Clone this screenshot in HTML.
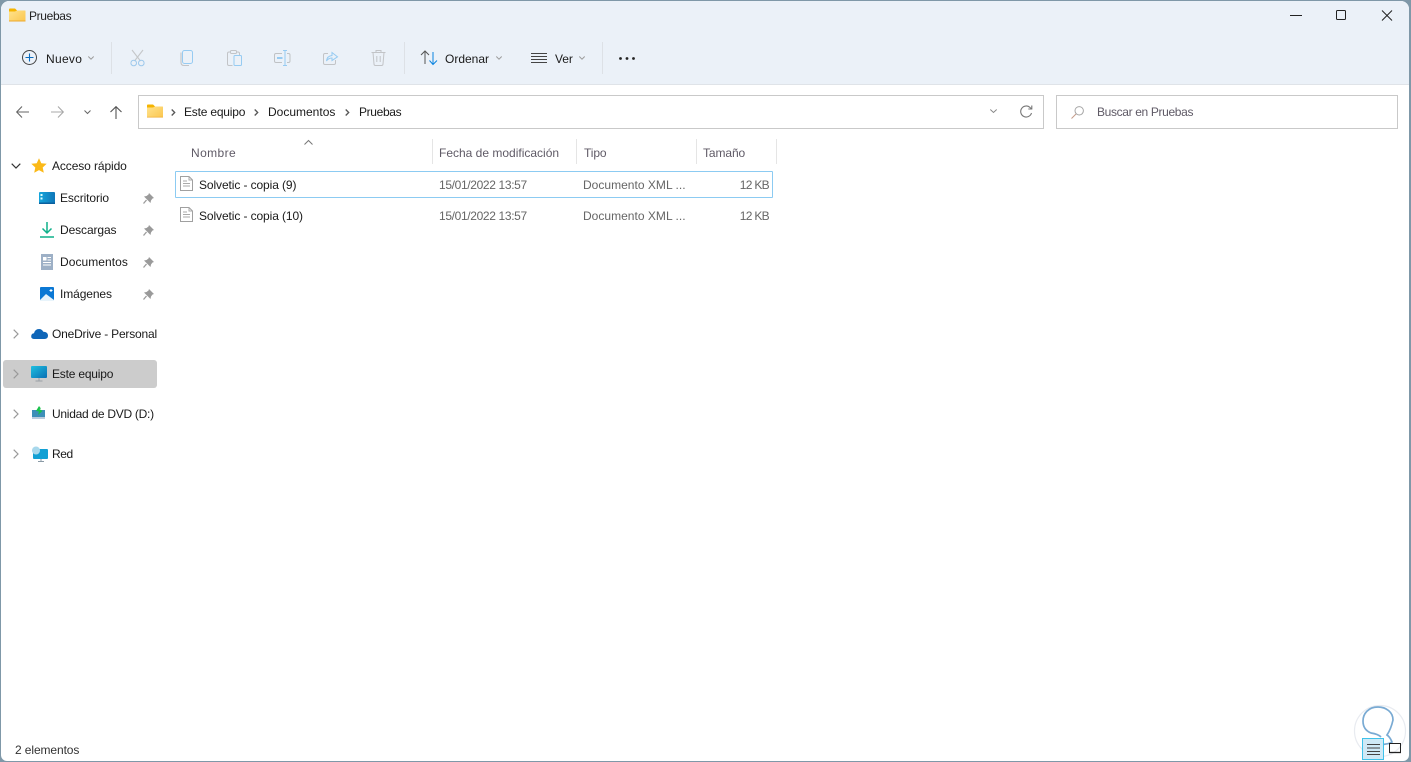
<!DOCTYPE html>
<html lang="es"><head><meta charset="utf-8"><title>Pruebas</title>
<style>
html,body{margin:0;padding:0;width:1411px;height:762px;overflow:hidden;background:#7f98a8}
body{font-family:"Liberation Sans",sans-serif;font-size:12px;color:#1a1a1a}
#win{position:absolute;left:1px;top:1px;width:1408px;height:760px;background:#fff;border-radius:8px 8px 6px 6px;overflow:hidden}
.t{position:absolute;white-space:nowrap;line-height:16px;letter-spacing:-.1px}
.g{color:#666}
.d{letter-spacing:-.35px}
.k{letter-spacing:-.7px}
.sep{position:absolute;width:1px;background:#dde1e6}
.box{position:absolute;background:#fff;border:1px solid #c9c9c9;box-sizing:border-box}
svg{position:absolute;overflow:visible}
.hd{position:absolute;top:139px;width:1px;height:25px;background:#e5e5e5}
</style></head><body>
<div id="win"></div>
<svg width="0" height="0" style="left:0;top:0"><defs>
<linearGradient id="fy" x1="0" y1="0" x2="1" y2="1"><stop offset="0" stop-color="#ffe592"/><stop offset="1" stop-color="#fbc64f"/></linearGradient>
<linearGradient id="mon" x1="0" y1="0" x2="1" y2="1"><stop offset="0" stop-color="#1ec0e0"/><stop offset="1" stop-color="#0a6fb4"/></linearGradient>
<linearGradient id="dsk" x1="0" y1="0" x2="1" y2="0"><stop offset="0" stop-color="#14a6dc"/><stop offset="1" stop-color="#0f76b8"/></linearGradient>
</defs></svg>
<div style="position:absolute;left:0;top:0;width:1411px;height:762px">
<div style="position:absolute;left:1px;top:1px;width:1408px;height:84px;background:#ebf1f8;border-bottom:1px solid #dfe3e8;border-radius:8px 8px 0 0;box-sizing:border-box"></div>

<!-- title -->
<svg style="left:9px;top:8px" width="17" height="14" viewBox="0 0 17 14"><path d="M0 1.500Q0 .5 1 .5H6L8 2.500H16Q16.500 2.500 16.500 3V13Q16.500 13.500 16 13.500H1Q0 13.500 0 12.500Z" fill="url(#fy)"/><path d="M0 1.500Q0 .5 1 .5H6L8 2.500L6 3.500H0Z" fill="#f5b400"/><path d="M0 12.500H16.500V13.500H0Z" fill="#eda92b"/></svg>
<div class="t" style="left:29px;top:8px;color:#222;letter-spacing:-.35px">Pruebas</div>

<!-- window controls -->
<svg style="left:1290px;top:5px" width="110" height="22" fill="none" stroke="#222" stroke-width="1"><path d="M0 10.500H12"/><rect x="46.500" y="5.500" width="9" height="9" rx="1"/><path d="M92 5.500L102 15.500M102 5.500L92 15.500"/></svg>

<!-- toolbar -->
<svg style="left:22px;top:50px" width="16" height="16" fill="none"><circle cx="7.500" cy="7.500" r="7" stroke="#444"/><path d="M7.500 3.500V11.500M3.500 7.500H11.500" stroke="#0b6cbd" stroke-width="1.100"/></svg>
<div class="t" style="left:46px;top:51px;letter-spacing:.3px">Nuevo</div>
<svg style="left:88px;top:56px" width="6" height="4" fill="none" stroke="#9a9a9a"><path d="M.3.5L3 3.200L5.700.5"/></svg>
<div class="sep" style="left:111px;top:42px;height:32px"></div>

<!-- cut -->
<svg style="left:130px;top:49px" width="16" height="18" fill="none"><path d="M2 1L10.500 12M13 1L4.500 12" stroke="#c5c7c9" stroke-width="1.100"/><circle cx="3.700" cy="14" r="2.800" stroke="#9cc8ec"/><circle cx="11.300" cy="14" r="2.800" stroke="#9cc8ec"/></svg>
<!-- copy -->
<svg style="left:180px;top:50px" width="14" height="16" fill="none"><path d="M1 2.500V12.500Q1 15.500 4 15.500H9" stroke="#c2c4c7" stroke-width="1.100"/><rect x="2.500" y=".5" width="10" height="13" rx="2" fill="#ebf1f8" stroke="#96cbf2"/></svg>
<!-- paste -->
<svg style="left:227px;top:50px" width="15" height="16" fill="none"><path d="M5.500 15.500H2Q.5 15.500 .5 14V3.500Q.5 2 2 2H11Q12.500 2 12.500 3.500V5" stroke="#c2c4c7"/><rect x="3.500" y=".5" width="6" height="3" rx="1" fill="#ebf1f8" stroke="#c2c4c7"/><rect x="7" y="5.500" width="7.500" height="10" rx="1" fill="#ebf1f8" stroke="#96cbf2"/></svg>
<!-- rename -->
<svg style="left:274px;top:50px" width="17" height="16" fill="none"><path d="M8 3.500H2Q.5 3.500 .5 5V11Q.5 12.500 2 12.500H8M13 3.500H14.500Q16 3.500 16 5V11Q16 12.500 14.500 12.500H13" stroke="#bfc2c5"/><path d="M3 8H8.500" stroke="#96cbf2" stroke-width="2"/><path d="M9 .5H13M11 .5V15.500M9 15.500H13" stroke="#96cbf2"/></svg>
<!-- share -->
<svg style="left:323px;top:50px" width="15" height="16" fill="none"><path d="M5 3.500H2Q.5 3.500 .5 5V13Q.5 14.500 2 14.500H11Q12.500 14.500 12.500 13V10" stroke="#c2c4c7"/><path d="M3.500 11Q4 6 9 5.500V2.500L14.500 6.800L9 10.500V8Q5.500 8 3.500 11Z" fill="#ebf1f8" stroke="#96cbf2"/></svg>
<!-- delete -->
<svg style="left:371px;top:50px" width="15" height="16" fill="none" stroke="#c2c4c7"><path d="M.5 2.500H14.500M5 2.500V.5H10V2.500M2 2.500L3 14Q3 15.500 4.500 15.500H10.500Q12 15.500 12 14L13 2.500M5.800 6V12M9.200 6V12"/></svg>
<div class="sep" style="left:404px;top:42px;height:32px"></div>

<!-- sort -->
<svg style="left:420px;top:50px" width="18" height="16" fill="none"><path d="M1 5L5 1L9 5M5 1V14" stroke="#555"/><path d="M9.500 10.500L13 14.500L17 10.500M13 2V14" stroke="#0a84e0"/></svg>
<div class="t" style="left:445px;top:51px;letter-spacing:0">Ordenar</div>
<svg style="left:496px;top:56px" width="6" height="4" fill="none" stroke="#9a9a9a"><path d="M.3.5L3 3.200L5.700.5"/></svg>
<!-- view -->
<svg style="left:531px;top:53px" width="16" height="10" fill="none" stroke="#444"><path d="M0 .5H16M0 3.500H16M0 6.500H16M0 9.500H16"/></svg>
<div class="t" style="left:555px;top:51px">Ver</div>
<svg style="left:579px;top:56px" width="6" height="4" fill="none" stroke="#9a9a9a"><path d="M.3.5L3 3.200L5.700.5"/></svg>
<div class="sep" style="left:602px;top:42px;height:32px"></div>
<svg style="left:619px;top:57px" width="16" height="3" fill="#222"><circle cx="1.500" cy="1.500" r="1.400"/><circle cx="8" cy="1.500" r="1.400"/><circle cx="14.500" cy="1.500" r="1.400"/></svg>

<!-- nav arrows -->
<svg style="left:16px;top:106px" width="13" height="12" fill="none" stroke="#666" stroke-width="1.100"><path d="M6 .5L.7 6L6 11.500M.7 6H13"/></svg>
<svg style="left:51px;top:106px" width="13" height="12" fill="none" stroke="#a8a8a8" stroke-width="1.100"><path d="M7 .5L12.300 6L7 11.500M12.300 6H0"/></svg>
<svg style="left:84px;top:110px" width="7" height="4" fill="none" stroke="#666"><path d="M.5.5L3.500 3.500L6.500.5"/></svg>
<svg style="left:110px;top:106px" width="12" height="13" fill="none" stroke="#555" stroke-width="1.100"><path d="M.5 6L6 .7L11.500 6M6 .7V13"/></svg>

<!-- address -->
<div class="box" style="left:138px;top:95px;width:906px;height:34px"></div>
<svg style="left:147px;top:104px" width="16" height="14" viewBox="0 0 16 14"><path d="M0 1.500Q0 .5 1 .5H6L8 2.500H15.500Q16 2.500 16 3V13Q16 13.500 15.500 13.500H1Q0 13.500 0 12.500Z" fill="url(#fy)"/><path d="M0 1.500Q0 .5 1 .5H6L8 2.500L6 3.500H0Z" fill="#f5b400"/><path d="M0 12.800H16V13.500H0Z" fill="#eda92b"/></svg>
<svg style="left:171px;top:109px" width="5" height="7" fill="none" stroke="#555" stroke-width="1.300"><path d="M.7.5L3.700 3.500L.7 6.500"/></svg>
<div class="t" style="left:184px;top:104px;letter-spacing:-.2px">Este equipo</div>
<svg style="left:254px;top:109px" width="5" height="7" fill="none" stroke="#555" stroke-width="1.300"><path d="M.7.5L3.700 3.500L.7 6.500"/></svg>
<div class="t" style="left:268px;top:104px;letter-spacing:0">Documentos</div>
<svg style="left:345px;top:109px" width="5" height="7" fill="none" stroke="#555" stroke-width="1.300"><path d="M.7.5L3.700 3.500L.7 6.500"/></svg>
<div class="t" style="left:359px;top:104px;letter-spacing:-.35px">Pruebas</div>
<svg style="left:990px;top:109px" width="7" height="4" fill="none" stroke="#888"><path d="M.3.500L3.500 3.500L6.700.500"/></svg>
<svg style="left:1020px;top:105px" width="13" height="13" fill="none" stroke="#777" stroke-width="1.100"><path d="M11.500 8A5.500 5.500 0 1 1 10 2.500L11.800 4M11.800 .5V4H8.300"/></svg>

<!-- search -->
<div class="box" style="left:1056px;top:95px;width:342px;height:34px"></div>
<svg style="left:1071px;top:106px" width="13" height="13" fill="none"><circle cx="8.200" cy="4.800" r="4.200" stroke="#a5a5a5"/><path d="M5 8L.5 12.500" stroke="#c49a8a"/></svg>
<div class="t d" style="left:1097px;top:104px;color:#5f5a66">Buscar en Pruebas</div>

<!-- sidebar -->
<svg style="left:11px;top:163px" width="10" height="6" fill="none" stroke="#333" stroke-width="1.200"><path d="M.7.7L5 5L9.300.7"/></svg>
<svg style="left:31px;top:158px" width="16" height="15" viewBox="0 0 16 15"><path d="M8 .3L10.300 5.200L15.700 5.800L11.700 9.500L12.800 14.800L8 12.100L3.200 14.800L4.300 9.500L.3 5.800L5.700 5.200Z" fill="#fbb917"/></svg>
<div class="t" style="left:52px;top:158px">Acceso rápido</div>

<svg style="left:39px;top:192px" width="16" height="12"><rect width="16" height="12" rx="1" fill="url(#dsk)"/><rect y="10.500" width="16" height="1.500" fill="#0a5f9e"/><rect x="1.500" y="2" width="2" height="2" fill="#dff"/><rect x="1.500" y="5.500" width="2" height="2" fill="#dff"/></svg>
<div class="t" style="left:60px;top:190px">Escritorio</div>
<svg style="left:143px;top:193px" width="11" height="11" viewBox="0 0 11 11" fill="#9a9a9a"><path d="M6 0L11 5L9.500 5.500L8 7.500L7.500 10L1 3.500L3.500 3L5.500 1.500Z"/><path d="M3.500 7L.5 10.500" stroke="#9a9a9a" stroke-width="1.300"/></svg>

<svg style="left:40px;top:222px" width="14" height="16" fill="none" stroke="#0fb08a" stroke-width="1.500"><path d="M7 0V11M2.500 6.500L7 11L11.500 6.500M0 15H14"/></svg>
<div class="t" style="left:60px;top:222px">Descargas</div>
<svg style="left:143px;top:225px" width="11" height="11" viewBox="0 0 11 11" fill="#9a9a9a"><path d="M6 0L11 5L9.500 5.500L8 7.500L7.500 10L1 3.500L3.500 3L5.500 1.500Z"/><path d="M3.500 7L.5 10.500" stroke="#9a9a9a" stroke-width="1.300"/></svg>

<svg style="left:41px;top:254px" width="12" height="16"><rect width="12" height="16" fill="#9db0c6"/><rect x="2" y="3" width="3.500" height="3.500" fill="#fff"/><path d="M6.500 3.500H10M6.500 6H10M2 8.500H10M2 11H10" stroke="#fff"/></svg>
<div class="t" style="left:60px;top:254px;letter-spacing:.05px">Documentos</div>
<svg style="left:143px;top:257px" width="11" height="11" viewBox="0 0 11 11" fill="#9a9a9a"><path d="M6 0L11 5L9.500 5.500L8 7.500L7.500 10L1 3.500L3.500 3L5.500 1.500Z"/><path d="M3.500 7L.5 10.500" stroke="#9a9a9a" stroke-width="1.300"/></svg>

<svg style="left:40px;top:287px" width="14" height="14"><rect width="14" height="14" rx="1" fill="#0b78d4"/><path d="M0 13L6 7L14 13V14H0Z" fill="#e8f4fb"/><path d="M11 2V5M9.500 3.500H12.500" stroke="#fff"/></svg>
<div class="t" style="left:60px;top:286px">Imágenes</div>
<svg style="left:143px;top:289px" width="11" height="11" viewBox="0 0 11 11" fill="#9a9a9a"><path d="M6 0L11 5L9.500 5.500L8 7.500L7.500 10L1 3.500L3.500 3L5.500 1.500Z"/><path d="M3.500 7L.5 10.500" stroke="#9a9a9a" stroke-width="1.300"/></svg>

<svg style="left:13px;top:329px" width="6" height="10" fill="none" stroke="#999" stroke-width="1.200"><path d="M.7.7L5 5L.7 9.300"/></svg>
<svg style="left:31px;top:328px" width="17" height="11" viewBox="0 0 17 11"><path d="M3.500 11Q0 11 .2 8Q.5 5.500 3 5.300Q4 1 8 1Q11 1 12.300 3.800Q16.800 4 17 7.500Q17 11 13.500 11Z" fill="#0f66b8"/></svg>
<div class="t" style="left:52px;top:326px;letter-spacing:-.2px">OneDrive - Personal</div>

<div style="position:absolute;left:3px;top:360px;width:154px;height:28px;background:#cccccc;border-radius:3px"></div>
<svg style="left:13px;top:369px" width="6" height="10" fill="none" stroke="#999" stroke-width="1.200"><path d="M.7.7L5 5L.7 9.300"/></svg>
<svg style="left:31px;top:366px" width="16" height="16"><rect width="16" height="12" rx="1" fill="url(#mon)"/><path d="M8 12V14.500M4.500 15H11.500" stroke="#9aa0a6"/></svg>
<div class="t" style="left:52px;top:366px;letter-spacing:-.2px">Este equipo</div>

<svg style="left:13px;top:409px" width="6" height="10" fill="none" stroke="#999" stroke-width="1.200"><path d="M.7.7L5 5L.7 9.300"/></svg>
<svg style="left:32px;top:406px" width="14" height="14"><rect y="4" width="13" height="9" fill="#3d8fb8"/><rect y="11" width="13" height="2" fill="#bcd"/><path d="M7 0L9 2.500L7.500 3L10.500 5L6 9L7 5.500L4 5Z" fill="#18c24a"/></svg>
<div class="t" style="left:52px;top:406px;letter-spacing:-.27px">Unidad de DVD (D:)</div>

<svg style="left:13px;top:449px" width="6" height="10" fill="none" stroke="#999" stroke-width="1.200"><path d="M.7.7L5 5L.7 9.300"/></svg>
<svg style="left:31px;top:446px" width="17" height="16"><rect x="2" y="3" width="15" height="10" rx="1" fill="#12a0d4"/><circle cx="5" cy="4.500" r="4" fill="#a8d8ec"/><path d="M10 13V15M7 15.500H13" stroke="#8a9aa6"/></svg>
<div class="t" style="left:52px;top:446px;letter-spacing:-.4px">Red</div>

<!-- headers -->
<svg style="left:304px;top:140px" width="9" height="5" fill="none" stroke="#777"><path d="M.5 4.500L4.500.5L8.500 4.500"/></svg>
<div class="t" style="left:191px;top:145px;color:#5f5a66;letter-spacing:.4px">Nombre</div>
<div class="hd" style="left:432px"></div>
<div class="t" style="left:439px;top:145px;color:#5f5a66;letter-spacing:0">Fecha de modificación</div>
<div class="hd" style="left:576px"></div>
<div class="t" style="left:584px;top:145px;color:#5f5a66">Tipo</div>
<div class="hd" style="left:696px"></div>
<div class="t" style="left:703px;top:145px;color:#5f5a66">Tamaño</div>
<div class="hd" style="left:776px"></div>

<!-- rows -->
<div style="position:absolute;left:175px;top:171px;width:598px;height:27px;border:1px solid #8ccbf2;box-sizing:border-box;border-radius:1px"></div>
<svg style="left:180px;top:176px" width="13" height="15" fill="#fff" stroke="#a0a0a0"><path d="M.5.5H9L12.500 4V14.500H.5Z"/><path d="M9 .5V4H12.500M3 5H7M3 7.500H10M3 10H10" fill="none" stroke="#aaa"/></svg>
<div class="t" style="left:199px;top:177px">Solvetic - copia (9)</div>
<div class="t g d" style="left:439px;top:177px">15/01/2022 13:57</div>
<div class="t g" style="left:583px;top:177px;letter-spacing:.02px">Documento XML ...</div>
<div class="t g k" style="right:642px;top:177px">12 KB</div>

<svg style="left:180px;top:207px" width="13" height="15" fill="#fff" stroke="#a0a0a0"><path d="M.5.5H9L12.500 4V14.500H.5Z"/><path d="M9 .5V4H12.500M3 5H7M3 7.500H10M3 10H10" fill="none" stroke="#aaa"/></svg>
<div class="t" style="left:199px;top:208px">Solvetic - copia (10)</div>
<div class="t g d" style="left:439px;top:208px">15/01/2022 13:57</div>
<div class="t g" style="left:583px;top:208px;letter-spacing:.02px">Documento XML ...</div>
<div class="t g k" style="right:642px;top:208px">12 KB</div>

<!-- status -->
<div class="t" style="left:15px;top:742px;color:#333">2 elementos</div>

<!-- watermark -->
<svg style="left:1354px;top:702px" width="56" height="60" fill="none"><circle cx="26" cy="29" r="25.500" stroke="#e8ebf0" stroke-width="1.200"/><path d="M24 43Q36 42 38 40Q36 35 33 33Q37 27 39 18C39 10 32 5 24 5C14 5 9 12 9 19C9 25 12 29 17 31Q24 32 27 35" stroke="#79aad3" stroke-width="1.700"/></svg>

<!-- view toggle -->
<div style="position:absolute;left:1362px;top:738px;width:22px;height:22px;background:#cfe9f6;border:1px solid #3fc2ea;box-sizing:border-box"></div>
<svg style="left:1367px;top:744px" width="13" height="11" fill="none" stroke="#444"><path d="M0 .5H13M0 4H13M0 7.500H13M0 10.500H13"/></svg>
<svg style="left:1389px;top:743px" width="12" height="11" fill="none" stroke="#222"><path d="M.5 9V.5H11.500V9"/><path d="M0 9.500H12" stroke-width="1.300"/></svg>
</div>
</body></html>
